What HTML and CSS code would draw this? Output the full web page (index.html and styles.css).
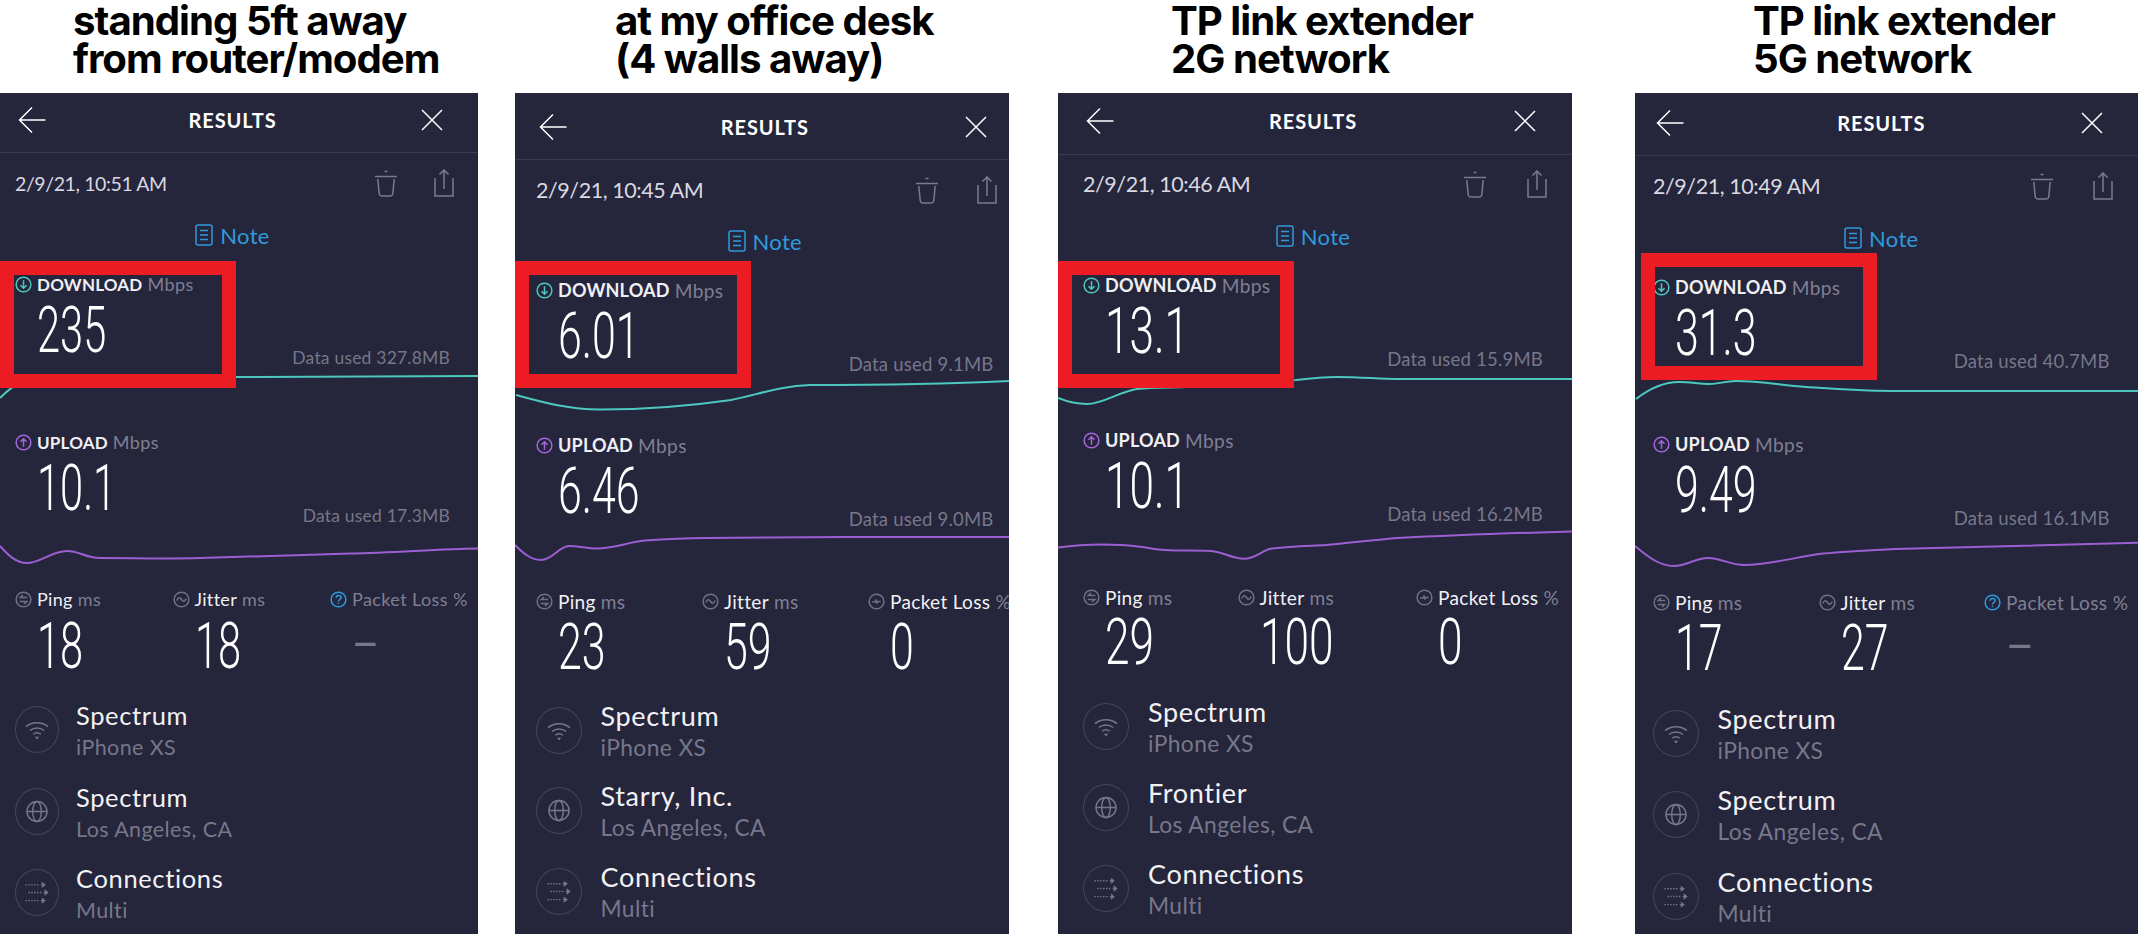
FILE: index.html
```html
<!DOCTYPE html>
<html lang="en">
<head>
    <meta charset="UTF-8">
    <title>Wifi speed test results</title>
    <link rel="stylesheet" href="styles.css">
</head>
<body>
    <svg class="sprite" width="0" height="0">
        <symbol id="i-back" viewBox="0 0 28 28"><path d="M27.5 14H1.5M14 1.5L1.5 14L14 26.5"/></symbol>
        <symbol id="i-close" viewBox="0 0 22 22"><path d="M1 1L21 21M21 1L1 21"/></symbol>
        <symbol id="i-trash" viewBox="0 0 24 28"><path d="M1 7.5H23M10.5 2.5H13.5M3.8 10L5.2 24.5Q5.5 27 8 27H16Q18.5 27 18.8 24.5L20.2 10"/></symbol>
        <symbol id="i-share" viewBox="0 0 20 28"><path d="M10 1V20M5.5 5.5L10 1L14.5 5.5M1 9V27H19V9"/></symbol>
        <symbol id="i-note" viewBox="0 0 18 22"><rect x="1" y="1" width="16" height="20" rx="2"/><path d="M5 6.5H13M5 11H13M5 15.5H13"/></symbol>
        <symbol id="i-down" viewBox="0 0 18 18"><circle cx="9" cy="9" r="7.8"/><path d="M9 4.5V13M5.8 9.8L9 13L12.2 9.8"/></symbol>
        <symbol id="i-up" viewBox="0 0 18 18"><circle cx="9" cy="9" r="7.8"/><path d="M9 13.5V5M5.8 8.2L9 5L12.2 8.2"/></symbol>
        <symbol id="i-ping" viewBox="0 0 18 18"><circle cx="9" cy="9" r="7.8"/><path d="M13 7H5.5L8.5 4.2M5 11H12.5L9.5 13.8"/></symbol>
        <symbol id="i-jitter" viewBox="0 0 18 18"><circle cx="9" cy="9" r="7.8"/><path d="M4 10C5.5 6.5 7.5 6.5 9 9S12.5 11.5 14 8"/></symbol>
        <symbol id="i-loss" viewBox="0 0 18 18"><circle cx="9" cy="9" r="7.8"/><path d="M4.5 9.5H7.5L8.5 7.8L9.5 10.5L10.5 9H13.5"/></symbol>
        <symbol id="i-help" viewBox="0 0 18 18"><circle cx="9" cy="9" r="7.8"/><path d="M6.5 7.2C6.5 3.8 11.8 4 11.8 7C11.8 9 9 9 9 11M9 12.5V13.8"/></symbol>
        <symbol id="i-wifi" viewBox="0 0 44 47"><path d="M10.5 20.5C17 15 27 15 33.5 20.5M14.5 24.5C19 21 25 21 29.5 24.5M18 28.5C20.5 26.6 23.5 26.6 26 28.5"/><path class="solid" d="M19.8 31L24.2 31L22 34Z"/></symbol>
        <symbol id="i-globe" viewBox="0 0 44 47"><circle cx="22" cy="23.5" r="10.5"/><ellipse cx="22" cy="23.5" rx="4.5" ry="10.5"/><path d="M11.5 23.5H32.5"/></symbol>
        <symbol id="i-links" viewBox="0 0 44 47"><path class="dots" d="M10 15.5H25M13 23.5H28M10 32H25"/><path d="M26 15.5H30M27 13L30 15.5L27 18M29 23.5H33M30 21L33 23.5L30 26M26 32H30M27 29.5L30 32L27 34.5"/></symbol>
    </svg>

    <main class="sheet">
        <section class="shot shot-1">
            <h2 class="shot-title">standing 5ft away<br>from router/modem</h2>
            <div class="panel">
                <div class="mark"></div>
                <header class="topbar">
                    <div class="topbar-row">
                        <svg class="ico back"><use href="#i-back"/></svg>
                        <span class="topbar-title">RESULTS</span>
                        <svg class="ico close"><use href="#i-close"/></svg>
                    </div>
                </header>
                <div class="date-row">
                    <span>2/9/21, 10:51 AM</span>
                    <div class="date-tools">
                        <svg class="ico trash"><use href="#i-trash"/></svg>
                        <svg class="ico share"><use href="#i-share"/></svg>
                    </div>
                </div>
                <div class="note-row"><svg class="ico note"><use href="#i-note"/></svg>Note</div>
                <div class="metric first">
                    <div class="label"><svg class="ico badge teal"><use href="#i-down"/></svg><b>DOWNLOAD</b> <i>Mbps</i></div>
                    <div class="speed-row"><span class="big">235</span><span class="used">Data used 327.8MB</span></div>
                </div>
                <svg class="graph teal-line" width="478" height="64" viewBox="0 368 478 64"><path d="M0 398C6 392 12 386 20 383C40 378 100 377 236 377L478 376"/></svg>
                <div class="metric">
                    <div class="label"><svg class="ico badge violet"><use href="#i-up"/></svg><b>UPLOAD</b> <i>Mbps</i></div>
                    <div class="speed-row"><span class="big">10.1</span><span class="used">Data used 17.3MB</span></div>
                </div>
                <svg class="graph violet-line" width="478" height="63" viewBox="0 526 478 63"><path d="M0 546C8 555 16 563 27 563C40 563 52 551 67 551C80 551 85 558 100 558C130 558 170 559 200 558S300 555 350 553.6S440 549 478 548.5"/></svg>
                <div class="stats">
                    <div>
                        <div class="label"><svg class="ico badge dim"><use href="#i-ping"/></svg><b>Ping</b> <i>ms</i></div>
                        <div class="big stat-val">18</div>
                    </div>
                    <div>
                        <div class="label"><svg class="ico badge dim"><use href="#i-jitter"/></svg><b>Jitter</b> <i>ms</i></div>
                        <div class="big stat-val">18</div>
                    </div>
                    <div>
                        <div class="label off"><svg class="ico badge blue"><use href="#i-help"/></svg><i>Packet Loss %</i></div>
                        <div class="big stat-val none">–</div>
                    </div>
                </div>
                <div class="info">
                    <div class="info-row"><svg class="ico disc"><use href="#i-wifi"/></svg><div class="info-text"><p>Spectrum</p><small>iPhone XS</small></div></div>
                    <div class="info-row"><svg class="ico disc"><use href="#i-globe"/></svg><div class="info-text"><p>Spectrum</p><small>Los Angeles, CA</small></div></div>
                    <div class="info-row"><svg class="ico disc"><use href="#i-links"/></svg><div class="info-text"><p>Connections</p><small>Multi</small></div></div>
                </div>
            </div>
        </section>

        <section class="shot shot-2">
            <h2 class="shot-title">at my office desk<br>(4 walls away)</h2>
            <div class="panel">
                <div class="mark"></div>
                <header class="topbar">
                    <div class="topbar-row">
                        <svg class="ico back"><use href="#i-back"/></svg>
                        <span class="topbar-title">RESULTS</span>
                        <svg class="ico close"><use href="#i-close"/></svg>
                    </div>
                </header>
                <div class="date-row">
                    <span>2/9/21, 10:45 AM</span>
                    <div class="date-tools">
                        <svg class="ico trash"><use href="#i-trash"/></svg>
                        <svg class="ico share"><use href="#i-share"/></svg>
                    </div>
                </div>
                <div class="note-row"><svg class="ico note"><use href="#i-note"/></svg>Note</div>
                <div class="metric first">
                    <div class="label"><svg class="ico badge teal"><use href="#i-down"/></svg><b>DOWNLOAD</b> <i>Mbps</i></div>
                    <div class="speed-row"><span class="big">6.01</span><span class="used">Data used 9.1MB</span></div>
                </div>
                <svg class="graph teal-line" width="494" height="61" viewBox="0 374 494 61"><path d="M1 395C30 403 55 409.5 85 409.5C130 409.5 175 406 216 400C245 394 265 386 295 385C360 385 430 384 494 381"/></svg>
                <div class="metric">
                    <div class="label"><svg class="ico badge violet"><use href="#i-up"/></svg><b>UPLOAD</b> <i>Mbps</i></div>
                    <div class="speed-row"><span class="big">6.46</span><span class="used">Data used 9.0MB</span></div>
                </div>
                <svg class="graph violet-line" width="494" height="62" viewBox="0 529 494 62"><path d="M0 545C8 553 16 560 26 560C38 560 44 546 54 546C64 546 72 548.5 82 548.5C98 548.5 114 542 130 540.6C150 539 170 538 192 538C240 538 280 537 330 537L494 537"/></svg>
                <div class="stats">
                    <div>
                        <div class="label"><svg class="ico badge dim"><use href="#i-ping"/></svg><b>Ping</b> <i>ms</i></div>
                        <div class="big stat-val">23</div>
                    </div>
                    <div>
                        <div class="label"><svg class="ico badge dim"><use href="#i-jitter"/></svg><b>Jitter</b> <i>ms</i></div>
                        <div class="big stat-val">59</div>
                    </div>
                    <div>
                        <div class="label"><svg class="ico badge dim"><use href="#i-loss"/></svg><b>Packet Loss</b> <i>%</i></div>
                        <div class="big stat-val">0</div>
                    </div>
                </div>
                <div class="info">
                    <div class="info-row"><svg class="ico disc"><use href="#i-wifi"/></svg><div class="info-text"><p>Spectrum</p><small>iPhone XS</small></div></div>
                    <div class="info-row"><svg class="ico disc"><use href="#i-globe"/></svg><div class="info-text"><p>Starry, Inc.</p><small>Los Angeles, CA</small></div></div>
                    <div class="info-row"><svg class="ico disc"><use href="#i-links"/></svg><div class="info-text"><p>Connections</p><small>Multi</small></div></div>
                </div>
            </div>
        </section>

        <section class="shot shot-3">
            <h2 class="shot-title">TP link extender<br>2G network</h2>
            <div class="panel">
                <div class="mark"></div>
                <header class="topbar">
                    <div class="topbar-row">
                        <svg class="ico back"><use href="#i-back"/></svg>
                        <span class="topbar-title">RESULTS</span>
                        <svg class="ico close"><use href="#i-close"/></svg>
                    </div>
                </header>
                <div class="date-row">
                    <span>2/9/21, 10:46 AM</span>
                    <div class="date-tools">
                        <svg class="ico trash"><use href="#i-trash"/></svg>
                        <svg class="ico share"><use href="#i-share"/></svg>
                    </div>
                </div>
                <div class="note-row"><svg class="ico note"><use href="#i-note"/></svg>Note</div>
                <div class="metric first">
                    <div class="label"><svg class="ico badge teal"><use href="#i-down"/></svg><b>DOWNLOAD</b> <i>Mbps</i></div>
                    <div class="speed-row"><span class="big">13.1</span><span class="used">Data used 15.9MB</span></div>
                </div>
                <svg class="graph teal-line" width="514" height="61" viewBox="0 369 514 61"><path d="M0 398C10 402 18 404 29 404C45 404 60 392 79 389C100 387 120 388 150 386C185 384 210 381 238 380C255 378 265 377 279 377C305 377 320 379 339 379L514 379"/></svg>
                <div class="metric">
                    <div class="label"><svg class="ico badge violet"><use href="#i-up"/></svg><b>UPLOAD</b> <i>Mbps</i></div>
                    <div class="speed-row"><span class="big">10.1</span><span class="used">Data used 16.2MB</span></div>
                </div>
                <svg class="graph violet-line" width="514" height="63" viewBox="0 524 514 63"><path d="M0 547.4C15 545.4 28 544.4 43 544.4C58 544.4 72 545.4 82 546.8C92 548 98 550 107 550C122 551 140 550 153 551C166 552 174 558.7 186 558.7C198 558.7 204 550 214 548.5C235 546 250 546 268 545C295 542 318 540 339 538C400 535 460 533 514 531.4"/></svg>
                <div class="stats">
                    <div>
                        <div class="label"><svg class="ico badge dim"><use href="#i-ping"/></svg><b>Ping</b> <i>ms</i></div>
                        <div class="big stat-val">29</div>
                    </div>
                    <div>
                        <div class="label"><svg class="ico badge dim"><use href="#i-jitter"/></svg><b>Jitter</b> <i>ms</i></div>
                        <div class="big stat-val">100</div>
                    </div>
                    <div>
                        <div class="label"><svg class="ico badge dim"><use href="#i-loss"/></svg><b>Packet Loss</b> <i>%</i></div>
                        <div class="big stat-val">0</div>
                    </div>
                </div>
                <div class="info">
                    <div class="info-row"><svg class="ico disc"><use href="#i-wifi"/></svg><div class="info-text"><p>Spectrum</p><small>iPhone XS</small></div></div>
                    <div class="info-row"><svg class="ico disc"><use href="#i-globe"/></svg><div class="info-text"><p>Frontier</p><small>Los Angeles, CA</small></div></div>
                    <div class="info-row"><svg class="ico disc"><use href="#i-links"/></svg><div class="info-text"><p>Connections</p><small>Multi</small></div></div>
                </div>
            </div>
        </section>

        <section class="shot shot-4">
            <h2 class="shot-title">TP link extender<br>5G network</h2>
            <div class="panel">
                <div class="mark"></div>
                <header class="topbar">
                    <div class="topbar-row">
                        <svg class="ico back"><use href="#i-back"/></svg>
                        <span class="topbar-title">RESULTS</span>
                        <svg class="ico close"><use href="#i-close"/></svg>
                    </div>
                </header>
                <div class="date-row">
                    <span>2/9/21, 10:49 AM</span>
                    <div class="date-tools">
                        <svg class="ico trash"><use href="#i-trash"/></svg>
                        <svg class="ico share"><use href="#i-share"/></svg>
                    </div>
                </div>
                <div class="note-row"><svg class="ico note"><use href="#i-note"/></svg>Note</div>
                <div class="metric first">
                    <div class="label"><svg class="ico badge teal"><use href="#i-down"/></svg><b>DOWNLOAD</b> <i>Mbps</i></div>
                    <div class="speed-row"><span class="big">31.3</span><span class="used">Data used 40.7MB</span></div>
                </div>
                <svg class="graph teal-line" width="503" height="63" viewBox="0 371 503 63"><path d="M1 399C14 389 28 382 44 382C56 382 64 384 75 384C84 384 90 381 101 381C125 381 145 385 171 387C200 389 225 391 257 391L503 391"/></svg>
                <div class="metric">
                    <div class="label"><svg class="ico badge violet"><use href="#i-up"/></svg><b>UPLOAD</b> <i>Mbps</i></div>
                    <div class="speed-row"><span class="big">9.49</span><span class="used">Data used 16.1MB</span></div>
                </div>
                <svg class="graph violet-line" width="503" height="64" viewBox="0 528 503 64"><path d="M0 546C12 556 24 566 39 566C52 566 60 558 73 558C86 558 95 565 109 565C135 565 160 557 188 553.6C215 551 240 550 260 549C340 547 420 545 503 542.7"/></svg>
                <div class="stats">
                    <div>
                        <div class="label"><svg class="ico badge dim"><use href="#i-ping"/></svg><b>Ping</b> <i>ms</i></div>
                        <div class="big stat-val">17</div>
                    </div>
                    <div>
                        <div class="label"><svg class="ico badge dim"><use href="#i-jitter"/></svg><b>Jitter</b> <i>ms</i></div>
                        <div class="big stat-val">27</div>
                    </div>
                    <div>
                        <div class="label off"><svg class="ico badge blue"><use href="#i-help"/></svg><i>Packet Loss %</i></div>
                        <div class="big stat-val none">–</div>
                    </div>
                </div>
                <div class="info">
                    <div class="info-row"><svg class="ico disc"><use href="#i-wifi"/></svg><div class="info-text"><p>Spectrum</p><small>iPhone XS</small></div></div>
                    <div class="info-row"><svg class="ico disc"><use href="#i-globe"/></svg><div class="info-text"><p>Spectrum</p><small>Los Angeles, CA</small></div></div>
                    <div class="info-row"><svg class="ico disc"><use href="#i-links"/></svg><div class="info-text"><p>Connections</p><small>Multi</small></div></div>
                </div>
            </div>
        </section>
    </main>
</body>
</html>
```

FILE: styles.css
```css
html, body { margin: 0; background: #fff; }
body { width: 2138px; height: 935px; overflow: hidden; font-family: Lato, "Open Sans", sans-serif; }
p { margin: 0; }
.sprite { position: absolute; }

.sheet { display: flex; align-items: flex-start; }
.shot { flex: none; width: var(--pw); margin-left: var(--gap); }

/* each screenshot was pasted at a slightly different scale, so the offsets live here */
.shot-1 { --gap: 0px; --pw: 478px; --pl: 15px; --w: 435px; --t-left: 73px; --tool-gap: 36px;
    --head-top: 7px; --head-h: 60px; --date-h: 60px; --note-h: 44px; --dl-top: 17px; --stat-gap: 6.5px;
    --rows-top: 30.5px; --row-gap: 34.5px; --cols: 157.5px 157.5px 1fr;
    --box-l: 0px; --box-t: 168px; --box-w: 236px;
    --k: 1; --date: 19.5px; --big-x: .64; --disc-w: 44px; --disc-gap: 17px; }
.shot-2 { --gap: 37px; --pw: 494px; --pl: 21px; --w: 457.5px; --t-left: 100px; --tool-gap: 38.5px;
    --head-top: 14px; --head-h: 67px; --date-h: 60px; --note-h: 42px; --dl-top: 18px; --stat-gap: 5.5px;
    --rows-top: 30.5px; --row-gap: 33.3px; --cols: 166px 166px 1fr;
    --box-l: 0px; --box-t: 168px; --box-w: 236px;
    --k: 1.06; --date: 21.5px; --big-x: .66; --disc-w: 46px; --disc-gap: 18.5px; }
.shot-3 { --gap: 49px; --pw: 514px; --pl: 25px; --w: 460px; --t-left: 113px; --tool-gap: 40px;
    --head-top: 8px; --head-h: 62px; --date-h: 58px; --note-h: 46px; --dl-top: 16px; --stat-gap: 5px;
    --rows-top: 31px; --row-gap: 34px; --cols: 154.5px 178.5px 1fr;
    --box-l: 0px; --box-t: 168px; --box-w: 236px;
    --k: 1.06; --date: 21.5px; --big-x: .68; --disc-w: 46px; --disc-gap: 19px; }
.shot-4 { --gap: 63px; --pw: 503px; --pl: 18px; --w: 456.6px; --t-left: 118px; --tool-gap: 39.6px;
    --head-top: 10px; --head-h: 63px; --date-h: 60px; --note-h: 44px; --dl-top: 17px; --stat-gap: 6px;
    --rows-top: 32px; --row-gap: 34.3px; --cols: 165.5px 165.5px 1fr;
    --box-l: 6px; --box-t: 160px; --box-w: 236px;
    --k: 1.06; --date: 21.5px; --big-x: .66; --disc-w: 46px; --disc-gap: 18.5px; }

.shot-title {
    box-sizing: border-box; height: 93px; margin: 0; padding: 2px 0 0 var(--t-left);
    font: 700 40.2px/38px Inter, sans-serif; letter-spacing: -0.025em; color: #000; white-space: nowrap;
}

.panel {
    position: relative; box-sizing: border-box; width: var(--pw); height: 841px;
    padding-left: var(--pl); background: #25253c; color: #fff; overflow: hidden;
}
.mark {
    position: absolute; left: var(--box-l); top: var(--box-t); z-index: 2; box-sizing: border-box;
    width: var(--box-w); height: 127px; border: 14px solid #ed1c24;
}

.ico { display: block; flex: none; fill: none; stroke: currentColor; stroke-width: 1.5; }
.back { width: 28px; height: 28px; margin-left: 3px; }
.close { width: 22px; height: 22px; margin-right: 7px; justify-self: end; }
.trash { width: 24px; height: 28px; color: #7b7b8d; }
.share { width: 20px; height: 28px; color: #7b7b8d; margin-right: -3.5px; }
.note { width: 18px; height: 22px; margin-right: 7px; color: #2f9bdc; }
.badge { width: 17px; height: 17px; margin-right: 5px; stroke-width: 1.6; }
.teal { color: #4cc8bf; }
.violet { color: #a566dc; }
.blue { color: #2f9bdc; }
.dim { color: #717184; }
.disc { width: var(--disc-w); height: 47px; border: 1.5px solid #46465a; border-radius: 50%; box-sizing: border-box; color: #77778a; }
.solid { fill: currentColor; stroke: none; }
.dots { stroke-dasharray: 1.5 1.5; }

.topbar {
    box-sizing: border-box; width: var(--pw); height: var(--head-h); margin-left: calc(-1 * var(--pl));
    padding: var(--head-top) 0 0 var(--pl); border-bottom: 1px solid #3a3a52;
}
.topbar-row { display: grid; grid-template-columns: 1fr auto 1fr; align-items: center; width: var(--w); height: 40px; }
.topbar-title { font-size: 20px; font-weight: 700; letter-spacing: .9px; }

.date-row { display: flex; justify-content: space-between; align-items: center; width: var(--w); height: var(--date-h); font-size: var(--date); letter-spacing: -.02em; color: #d9d9e0; }
.date-tools { display: flex; gap: var(--tool-gap); }
.note-row { display: flex; justify-content: center; align-items: center; width: var(--w); height: var(--note-h); font-size: 22px; letter-spacing: .3px; color: #2f9bdc; }

.first { padding-top: var(--dl-top); }
.metric { width: var(--w); }
.label { display: flex; align-items: center; height: 20px; font-size: calc(17px * var(--k)); white-space: nowrap; }
.label b { font-weight: 700; letter-spacing: .2px; color: #f0f0f4; margin-right: 5px; }
.label i { font-style: normal; font-size: calc(18px * var(--k)); letter-spacing: .4px; color: #7f7f92; }
.stats .label { font-size: calc(18px * var(--k)); }
.stats .label b { font-weight: 400; letter-spacing: .3px; }
.speed-row { display: flex; justify-content: space-between; align-items: flex-end; height: 68px; margin-top: 6px; padding-left: 22px; }
.big {
    display: block; align-self: flex-start; font: 300 65px/60px Roboto, sans-serif;
    transform: scaleX(var(--big-x)); transform-origin: 0 50%;
}
.used { font-size: calc(17.5px * var(--k)); letter-spacing: .2px; line-height: 20px; color: #77778a; }

.graph { display: block; margin-left: calc(-1 * var(--pl)); fill: none; stroke-width: 2; }
.teal-line { stroke: #4cc8bf; }
.violet-line { stroke: #9c5fd2; }

.stats { display: grid; grid-template-columns: var(--cols); width: var(--w); }
.stat-val { margin: var(--stat-gap) 0 0 22px; }
.none { color: #77778a; }

.info { display: flex; flex-direction: column; gap: var(--row-gap); padding-top: var(--rows-top); }
.info-row { display: flex; align-items: center; gap: var(--disc-gap); height: 47px; }
.info-text { padding-top: 3px; }
.info-row p { font-size: calc(25.5px * var(--k)); letter-spacing: .025em; line-height: 32px; color: #f2f2f5; }
.info-row small { display: block; font-size: calc(21.5px * var(--k)); letter-spacing: .4px; line-height: 32px; color: #77778a; }
```
